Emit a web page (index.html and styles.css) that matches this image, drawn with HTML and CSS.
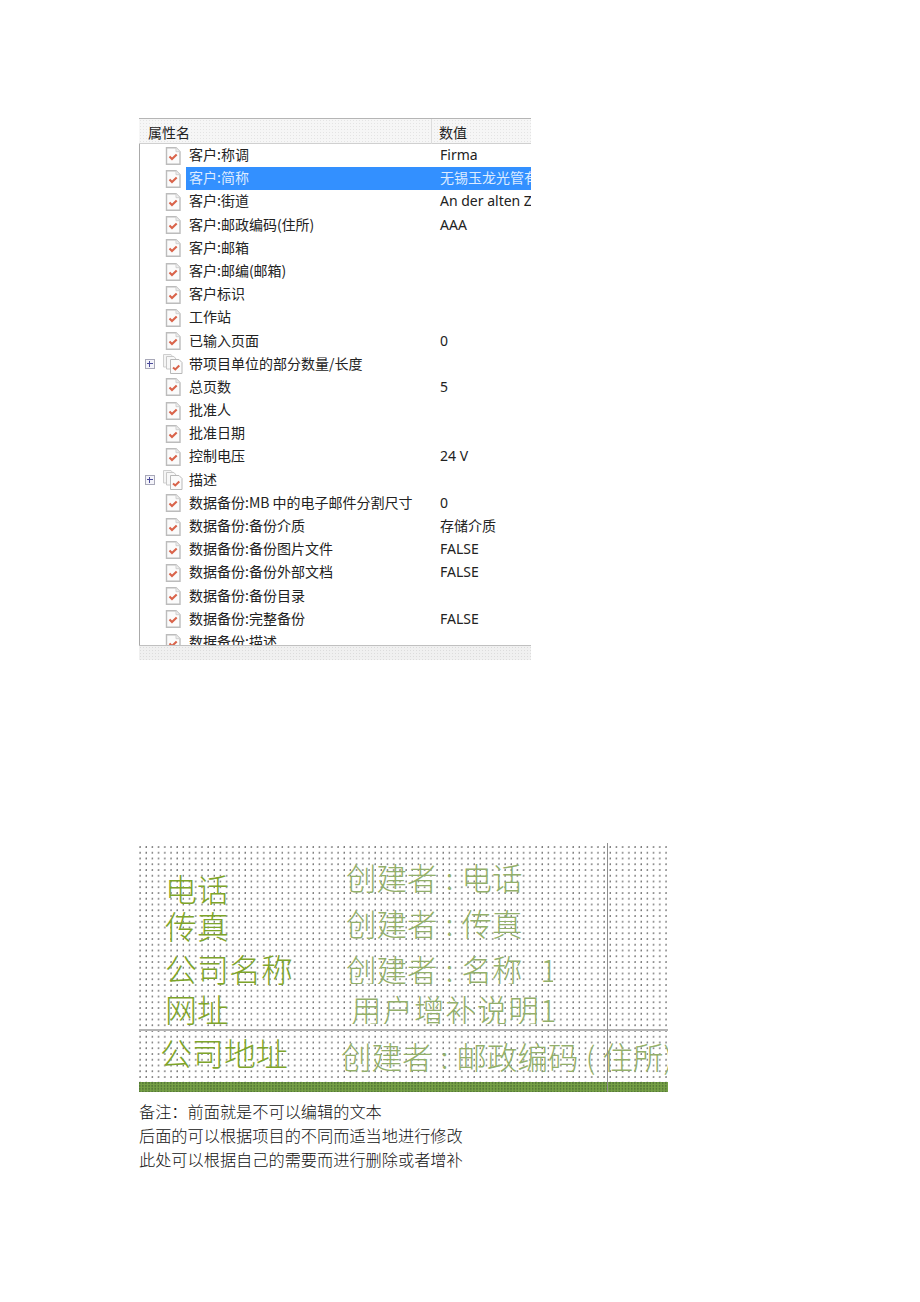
FILE: index.html
```html
<!DOCTYPE html>
<html lang="zh-CN">
<head>
    <meta charset="UTF-8">
    <title>属性名</title>
    <link rel="stylesheet" href="styles.css">
</head>
<body>
    <svg class="defs" width="0" height="0">
        <symbol id="doc" viewBox="0 0 16 18">
            <path d="M1.5 .7H11L15 4.7V17.3H1.5Z" fill="#fbfbfb" stroke="#bcbcbc" stroke-width="1.4"/>
            <path d="M11 .7V4.7H15" fill="#eee" stroke="#cfcfcf"/>
            <path d="M4.5 9.5L7 12L11.7 7.5" fill="none" stroke="#d9634a" stroke-width="2.1"/>
        </symbol>
        <symbol id="docs" viewBox="0 0 20 20">
            <path d="M.5 .5H8L10 3V13H.5Z" fill="#f4f4f4" stroke="#cfcfcf"/>
            <path d="M3.5 2.5H11L13 5V15H3.5Z" fill="#f8f8f8" stroke="#c8c8c8"/>
            <path d="M7.5 5.5H16L19 8.5V19.5H7.5Z" fill="#fbfbfb" stroke="#b8b8b8"/>
            <path d="M10 13.5L12.3 15.5L16.3 11.5" fill="none" stroke="#d9634a" stroke-width="2"/>
        </symbol>
    </svg>

    <div class="props">
        <div class="props-head">
            <div class="col-name">属性名</div>
            <div class="col-value">数值</div>
        </div>
        <div class="props-list" id="props-list"></div>
        <div class="props-foot"></div>
    </div>

    <div class="canvas">
        <span class="label label-phone">电话</span>
        <span class="label label-fax">传真</span>
        <span class="label label-company">公司名称</span>
        <span class="label label-web">网址</span>
        <span class="label label-address">公司地址</span>
        <span class="value value-phone">创建者<span class="sep">:</span>电话</span>
        <span class="value value-fax">创建者<span class="sep">:</span>传真</span>
        <span class="value value-company">创建者<span class="sep">:</span>名称<span class="gap"> </span>1</span>
        <span class="value value-web">用户增补说明1</span>
        <span class="value value-address">创建者<span class="sep">:</span>邮政编码<span class="sep">(</span>住所)</span>
        <div class="line-h"></div>
        <div class="canvas-bar"></div>
        <div class="line-v"></div>
    </div>

    <div class="note">
        <p>备注：前面就是不可以编辑的文本</p>
        <p>后面的可以根据项目的不同而适当地进行修改</p>
        <p>此处可以根据自己的需要而进行删除或者增补</p>
    </div>

    <script>
        const rows = [
            ['客户:称调', 'Firma'],
            ['客户:简称', '无锡玉龙光管有限公司', 'selected'],
            ['客户:街道', 'An der alten Zollstrasse'],
            ['客户:邮政编码(住所)', 'AAA'],
            ['客户:邮箱', ''],
            ['客户:邮编(邮箱)', ''],
            ['客户标识', ''],
            ['工作站', ''],
            ['已输入页面', '0'],
            ['带项目单位的部分数量/长度', '', 'group'],
            ['总页数', '5'],
            ['批准人', ''],
            ['批准日期', ''],
            ['控制电压', '24 V'],
            ['描述', '', 'group'],
            ['数据备份:MB 中的电子邮件分割尺寸', '0'],
            ['数据备份:备份介质', '存储介质'],
            ['数据备份:备份图片文件', 'FALSE'],
            ['数据备份:备份外部文档', 'FALSE'],
            ['数据备份:备份目录', ''],
            ['数据备份:完整备份', 'FALSE'],
            ['数据备份:描述', '']
        ];

        const list = document.getElementById('props-list');
        rows.forEach(function (r) {
            const row = document.createElement('div');
            row.className = 'row ' + (r[2] || '');
            const isGroup = r[2] === 'group';
            row.innerHTML = `
                <span class="expander">${isGroup ? '<i class="plus"></i>' : ''}</span>
                <svg class="${isGroup ? 'icon-group' : 'icon'}"><use href="#${isGroup ? 'docs' : 'doc'}"></use></svg>
                <span class="row-name">${r[0]}</span>
                <span class="row-value">${r[1]}</span>
            `;
            list.appendChild(row);
        });
    </script>
</body>
</html>
```

FILE: styles.css
```css
body {
    margin: 0;
    background: #fff;
    font-family: "Noto Sans CJK SC", sans-serif;
    color: #222;
}
.defs {
    position: absolute;
}
.props {
    width: 392px;
    height: 542px;
    margin: 118px 0 0 139px;
    display: flex;
    flex-direction: column;
    overflow: hidden;
    border-top: 1px solid #b5b5b5;
    box-sizing: border-box;
}
.props-head {
    height: 25px;
    flex: none;
    display: flex;
    align-items: center;
    font-size: 14px;
    box-sizing: border-box;
    border-bottom: 1px solid #d0d0d0;
    background-color: #f6f6f6;
    background-image: radial-gradient(#e4e4e4 .7px, transparent .8px);
    background-size: 3px 3px;
}
.col-name {
    width: 293px;
    padding: 1px 0 0 9px;
    box-sizing: border-box;
    border-right: 1px solid #dcdcdc;
    line-height: 24px;
}
.col-value {
    padding: 1px 0 0 7px;
}
.props-list {
    flex: 1;
    overflow: hidden;
    border-left: 1px solid #aaa;
}
.row {
    height: 23.2px;
    display: flex;
    align-items: center;
    font-size: 14px;
    white-space: nowrap;
}
.expander {
    width: 25px;
    flex: none;
    display: flex;
    justify-content: center;
}
.plus {
    position: relative;
    width: 10px;
    height: 10px;
    margin-right: 5px;
    box-sizing: border-box;
    border: 1px solid #a8a8b8;
    background: #f4f4fa;
}
.plus::before,
.plus::after {
    content: "";
    position: absolute;
    background: #4a4a9a;
}
.plus::before {
    left: 1px;
    top: 3px;
    width: 6px;
    height: 1px;
}
.plus::after {
    left: 3px;
    top: 1px;
    width: 1px;
    height: 6px;
}
.icon {
    width: 16px;
    height: 18px;
    margin-right: 8px;
    flex: none;
}
.icon-group {
    width: 20px;
    height: 20px;
    margin: 0 6px 0 -2px;
    flex: none;
}
.row-name {
    width: 251px;
    flex: none;
    height: 100%;
    line-height: 21px;
}
.row-value {
    height: 100%;
    line-height: 21px;
    font-family: "Noto Sans", "Noto Sans CJK SC", sans-serif;
}
.row.selected .icon {
    margin-right: 5px;
}
.row.selected .row-name {
    width: 254px;
    padding-left: 3px;
    box-sizing: border-box;
}
.row.selected .row-name,
.row.selected .row-value {
    background: #3390ff;
    color: #dcebff;
}
.row.selected .row-value {
    flex: 1;
    overflow: hidden;
}
.props-foot {
    height: 14px;
    flex: none;
    border-top: 1px solid #c0c0c0;
    background-color: #f0f0f0;
    background-image: radial-gradient(#dcdcdc .7px, transparent .8px);
    background-size: 3px 3px;
}
.canvas {
    position: relative;
    width: 529px;
    height: 249px;
    margin: 183px 0 0 139px;
    overflow: hidden;
    background-image: radial-gradient(circle at 1px 1px, #777 .6px, transparent .9px);
    background-size: 6.2px 5.75px;
    background-position: 0 3px;
}
.label,
.value {
    position: absolute;
    line-height: 30px;
    white-space: nowrap;
    font-weight: 300;
}
.label {
    font-size: 32px;
    color: #7ea52a;
}
.value {
    font-size: 30.5px;
    color: #93b06a;
}
.sep {
    display: inline-block;
    width: 24px;
    text-align: center;
}
.gap {
    display: inline-block;
    width: 18px;
}
.label-phone { left: 26px; top: 30px; }
.label-fax { left: 26px; top: 67px; }
.label-company { left: 26px; top: 110px; }
.label-web { left: 26px; top: 150px; }
.label-address { left: 21px; top: 194px; }
.value-phone { left: 207px; top: 19px; }
.value-fax { left: 207px; top: 65px; }
.value-company { left: 207px; top: 111px; width: 207px; overflow: hidden; }
.value-web { left: 212px; top: 151px; width: 206px; overflow: hidden; letter-spacing: 1px; }
.value-address { left: 202px; top: 198px; }
.line-h {
    position: absolute;
    left: 0;
    right: 0;
    top: 186px;
    height: 2px;
    background: #b4b4b4;
}
.line-v {
    position: absolute;
    left: 468px;
    top: 0;
    bottom: 0;
    width: 1px;
    background: #8f8f8f;
}
.canvas-bar {
    position: absolute;
    left: 0;
    right: 0;
    bottom: 0;
    height: 10px;
    background-color: #76a046;
    background-image: radial-gradient(circle at 1px 1px, #567a38 .8px, transparent 1px);
    background-size: 3.1px 2.9px;
}
.note {
    margin: 7px 0 0 139px;
    font-size: 16.2px;
    line-height: 24px;
    font-weight: 300;
    color: #111;
}
.note p {
    margin: 0;
}
```
